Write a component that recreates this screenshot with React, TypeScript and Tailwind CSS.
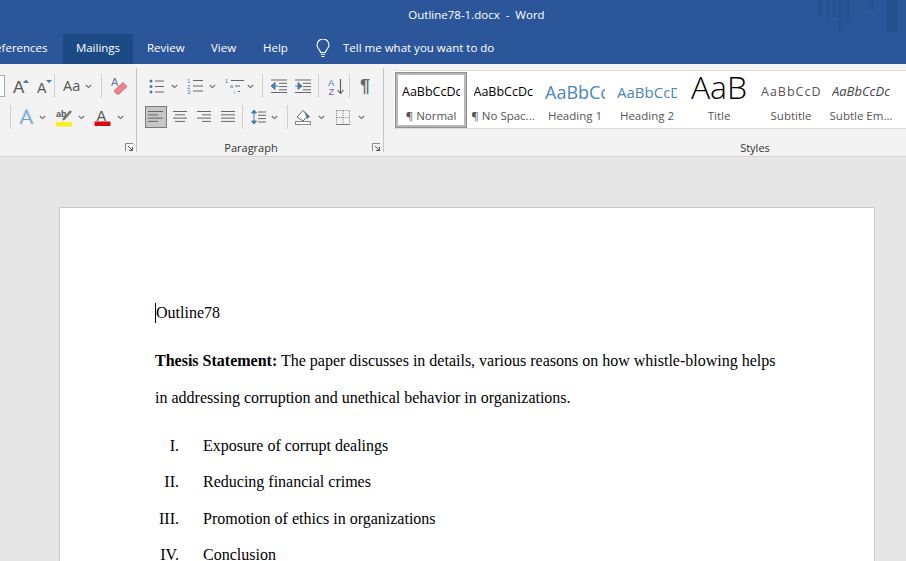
import React from "react";

const ui = "font-['Open_Sans','Noto_Sans',sans-serif]";
const B = "#4a7ba6";

function Svg({ w, h, children, className = "" }: { w: number; h: number; children: React.ReactNode; className?: string }) {
  return (
    <svg width={w} height={h} viewBox={`0 0 ${w} ${h}`} fill="none" className={`shrink-0 block ${className}`}>
      {children}
    </svg>
  );
}
const Chev = ({ className = "" }: { className?: string }) => (
  <Svg w={7} h={5} className={className}>
    <path d="M.8 1 3.5 3.6 6.2 1" stroke="#6a6a6a" strokeWidth="1.1" />
  </Svg>
);
const Sep = ({ className = "" }: { className?: string }) => <div className={`w-px h-[24px] bg-[#d0d0d0] shrink-0 ${className}`} />;

const Lines = ({ rows }: { rows: [number, number][] }) => (
  <Svg w={16} h={14}>
    {rows.map(([a, b], i) => (
      <path key={i} d={`M${a} ${1.5 + i * 3.3}H${b}`} stroke="#666" strokeWidth="1" />
    ))}
  </Svg>
);

const Launcher = () => (
  <Svg w={9} h={9}>
    <path d="M.5 8V.5H8" stroke="#888" />
    <path d="M3 3 7.5 7.5M7.5 4v3.5H4" stroke="#555" />
  </Svg>
);

function Bullets() {
  return (
    <Svg w={15} h={15}>
      {[2, 7.5, 13].map((y) => (
        <g key={y}>
          <circle cx="2" cy={y} r="1.5" fill={B} />
          <path d={`M6 ${y}H15`} stroke="#666" />
        </g>
      ))}
    </Svg>
  );
}
function Numbers() {
  return (
    <Svg w={16} h={16}>
      {[5, 10.5, 15.5].map((y, i) => (
        <g key={y}>
          <text x="0" y={y} fontSize="6" fill={B} fontFamily="Liberation Sans">{i + 1}</text>
          <path d={`M6 ${y - 2.5}H16`} stroke="#666" />
        </g>
      ))}
    </Svg>
  );
}
function Multi() {
  return (
    <Svg w={19} h={16}>
      <text x="0" y="5" fontSize="5.5" fill={B} fontFamily="Liberation Sans">1</text>
      <path d="M6 2.5H19" stroke="#666" />
      <text x="5" y="10" fontSize="5.5" fill={B} fontFamily="Liberation Sans">a</text>
      <path d="M10 8H15" stroke="#666" />
      <text x="9" y="15.5" fontSize="5.5" fill={B} fontFamily="Liberation Sans">i</text>
      <path d="M13 13.5H15" stroke="#666" />
    </Svg>
  );
}
function Indent({ flip }: { flip?: boolean }) {
  return (
    <Svg w={17} h={14}>
      <path d="M1 1H17M9 4.3H17M9 7.6H17M9 10.8H17M1 13.5H17" stroke="#666" />
      {flip ? (
        <path d="M1 7H5M4 3.5 8 7 4 10.5Z" fill={B} stroke={B} />
      ) : (
        <path d="M8 7H4M5 3.5 1 7 5 10.5Z" fill={B} stroke={B} />
      )}
    </Svg>
  );
}
function Sort() {
  return (
    <Svg w={17} h={17}>
      <text x="0" y="8" fontSize="9.5" fill={B} fontFamily="Liberation Sans">A</text>
      <text x="0.5" y="16.5" fontSize="9.5" fill="#8a5aa8" fontFamily="Liberation Sans">Z</text>
      <path d="M12.5 1V15M9.5 12 12.5 15.5 15.5 12" stroke="#555" strokeWidth="1.1" />
    </Svg>
  );
}
function Shading() {
  return (
    <Svg w={17} h={16}>
      <path d="M2 8 8 1.5 13 7 8 12Z" fill="#fff" stroke="#666" />
      <path d="M9 2 15 7.5 12 10Z" fill={B} />
      <rect x="0.5" y="12.5" width="15" height="3" fill="#fff" stroke="#888" />
    </Svg>
  );
}
function Borders() {
  return (
    <Svg w={14} h={15}>
      <path d="M.5.5H13.5V14.5H.5Z M7 .5V14.5 M.5 7.5H13.5" stroke="#777" strokeDasharray="1 1.2" />
      <path d="M.5 14.5H13.5" stroke="#777" />
    </Svg>
  );
}
function LineSpacing() {
  return (
    <Svg w={15} h={16}>
      <path d="M3 1V15" stroke={B} />
      <path d="M.5 4 3 1 5.5 4ZM.5 12 3 15 5.5 12Z" fill={B} stroke={B} />
      <path d="M7 3H15M7 6.3H15M7 9.6H15M7 13H15" stroke="#666" />
    </Svg>
  );
}
function Eraser() {
  return (
    <Svg w={17} h={19}>
      <text x="0" y="9" fontSize="11" fill="#6f6f9a" fontFamily="Liberation Sans">A</text>
      <path d="M3 14 12 5.5 16 9.5 8 17 5.5 17Z" fill="#e9848f" stroke="#d96a78" />
    </Svg>
  );
}
function TextEffects() {
  return (
    <Svg w={15} h={16}>
      <path d="M1.5 15 7.5 1.5 13.5 15" stroke="#c3dcef" strokeWidth="3.6" strokeLinejoin="round" />
      <path d="M1.5 15 7.5 1.5 13.5 15M4 10.5H11" stroke="#6f9cc4" strokeWidth="1.1" />
    </Svg>
  );
}
function Highlight() {
  return (
    <Svg w={17} h={19}>
      <text x="0" y="9" fontSize="9" fontWeight="700" fill="#555" fontFamily="Liberation Sans">ab</text>
      <path d="M7 12 15 3" stroke="#777" strokeWidth="2.6" />
      <rect x="0" y="14" width="16" height="4.5" fill="#f7f01c" />
    </Svg>
  );
}
function FontColor() {
  return (
    <Svg w={17} h={19}>
      <text x="2.5" y="12.5" fontSize="14.5" fill="#555" fontFamily="Liberation Sans">A</text>
      <rect x="0.5" y="13.5" width="16" height="4.5" fill="#d9090f" />
    </Svg>
  );
}
function Grow({ small }: { small?: boolean }) {
  return (
    <Svg w={16} h={18}>
      <text x={0} y={16} fontSize={small ? 14 : 17} fill="#555" fontFamily="Liberation Sans">A</text>
      <path d={small ? "M9 3H15L12 6Z" : "M10 6 13 2.5 16 6Z"} fill={B} />
    </Svg>
  );
}
function Bulb() {
  return (
    <svg width="14" height="19" viewBox="0 0 14 19" fill="none" className="shrink-0 block">
      <path d="M4.5 13.5C4.5 10.5 1 9.5 1 6A6 6 0 0 1 13 6C13 9.5 9.5 10.5 9.5 13.5Z" stroke="#fff" strokeWidth="1.1" />
      <path d="M4.8 15.3H9.2M5.5 17.5H8.5" stroke="#fff" strokeWidth="1.1" />
    </svg>
  );
}

const Tab = ({ children, className = "" }: { children: React.ReactNode; className?: string }) => (
  <div className={`h-[30px] flex items-center pb-[2px] text-[11.5px] text-white leading-none shrink-0 ${className}`}>{children}</div>
);

function StyleItem({ sample, sampleClass, label, w, selected }: { sample: string; sampleClass: string; label: string; w: string; selected?: boolean }) {
  return (
    <div className={`${w} h-[56px] shrink-0 flex flex-col items-center overflow-hidden ${selected ? "bg-white border-[3px] border-[#b9b9b9] outline outline-1 outline-[#8f8f8f] -outline-offset-1" : "border-[3px] border-transparent"}`}>
      <div className="h-[35px] w-full flex items-center justify-center overflow-hidden shrink-0">
        <span className={`whitespace-nowrap block overflow-hidden text-clip ${sampleClass}`}>{sample}</span>
      </div>
      <div className="text-[11.5px] leading-none text-[#555] whitespace-nowrap">{label}</div>
    </div>
  );
}

const docLine = "whitespace-nowrap text-[16px] text-black";

function ListRow({ n, t, className }: { n: string; t: string; className: string }) {
  return (
    <div className={`flex ${docLine} h-[20px] leading-[20px] ${className}`}>
      <div className="w-[24px] text-right">{n}</div>
      <div className="ml-[24px]">{t}</div>
    </div>
  );
}

export default function App() {
  return (
    <div className={`w-[906px] h-[561px] overflow-hidden bg-[#e6e6e6] flex flex-col relative ${ui}`}>
      {/* Title bar */}
      <div className="h-[34px] bg-[#2b579a] flex items-center justify-center shrink-0 relative pb-[4px]">
        <div className="text-[11.5px] text-white whitespace-pre leading-none ml-[47px]">Outline78-1.docx  -  Word</div>
        <svg width="90" height="34" viewBox="0 0 90 34" className="absolute right-0 top-0">
          <g fill="#24508c">
            <rect x="2" y="0" width="5" height="16" opacity="0.8" />
            <rect x="10" y="0" width="4" height="21" opacity="0.6" />
            <rect x="16" y="0" width="5" height="17" opacity="0.6" />
            <rect x="22" y="0" width="5" height="32" opacity="0.6" />
            <rect x="29" y="0" width="5" height="22" opacity="0.6" />
            <rect x="52" y="0" width="6" height="10" opacity="0.6" />
            <rect x="71" y="0" width="10" height="32" />
          </g>
        </svg>
      </div>
      {/* Tabs */}
      <div className="h-[30px] bg-[#2b579a] flex shrink-0 overflow-hidden">
        <Tab className="ml-[-12px] w-[60px]">References</Tab>
        <Tab className="ml-[15px] w-[70px] justify-center bg-[#1c4a85]">Mailings</Tab>
        <Tab className="ml-[14px] w-[37px]">Review</Tab>
        <Tab className="ml-[27px] w-[25px]">View</Tab>
        <Tab className="ml-[27px] w-[26px]">Help</Tab>
        <Tab className="ml-[27px]"><Bulb /></Tab>
        <Tab className="ml-[13px]">Tell me what you want to do</Tab>
      </div>
      {/* Ribbon */}
      <div className="h-[93px] bg-[#f3f3f3] border-b border-[#d4d4d4] flex shrink-0">
        {/* Font group */}
        <div className="w-[137px] shrink-0 flex flex-col relative border-r border-[#c6c6c6] mb-[4px] mt-[4px]">
          <div className="h-[22px] mt-[7px] flex items-center">
            <div className="w-[5px] h-[22px] bg-white border border-l-0 border-[#ababab] shrink-0" />
            <div className="ml-[8px]"><Grow /></div>
            <div className="ml-[8px]"><Grow small /></div>
            <Sep className="ml-[1px]" />
            <span className="ml-[7px] text-[14.5px] leading-none text-[#555] w-[21px] pl-[1px]">Aa</span>
            <Chev className="ml-[2px]" />
            <Sep className="ml-[9px]" />
            <div className="ml-[9px]"><Eraser /></div>
          </div>
          <div className="h-[22px] mt-[9px] flex items-center">
            <Sep className="ml-[10px]" />
            <div className="ml-[8px]"><TextEffects /></div>
            <Chev className="ml-[5px]" />
            <div className="ml-[10px]"><Highlight /></div>
            <Chev className="ml-[5px]" />
            <div className="ml-[9px]"><FontColor /></div>
            <Chev className="ml-[6px]" />
          </div>
          <div className="mt-auto ml-[125px]"><Launcher /></div>
        </div>
        {/* Paragraph group */}
        <div className="w-[247px] shrink-0 flex flex-col border-r border-[#c6c6c6] mb-[4px] mt-[4px]">
          <div className="h-[22px] mt-[7px] flex items-center">
            <div className="ml-[12px]"><Bullets /></div>
            <Chev className="ml-[7px]" />
            <div className="ml-[9px]"><Numbers /></div>
            <Chev className="ml-[6px]" />
            <div className="ml-[9px]"><Multi /></div>
            <Chev className="ml-[3px]" />
            <Sep className="ml-[8px]" />
            <div className="ml-[7px]"><Indent /></div>
            <div className="ml-[7px]"><Indent flip /></div>
            <Sep className="ml-[7px]" />
            <div className="ml-[9px]"><Sort /></div>
            <Sep className="ml-[4px]" />
            <span className="ml-[10px] text-[18px] font-['Liberation_Sans'] font-bold leading-none text-[#666] -mt-[1px]">¶</span>
          </div>
          <div className="h-[22px] mt-[9px] flex items-center">
            <div className="ml-[8px] w-[22px] h-[22px] bg-[#c6c6c6] border border-[#7b7b7b] flex items-center justify-center shrink-0">
              <Lines rows={[[0, 15], [0, 10], [0, 15], [0, 10]]} />
            </div>
            <div className="ml-[5px]"><Lines rows={[[1, 15], [3, 13], [1, 15], [3, 13]]} /></div>
            <div className="ml-[8px]"><Lines rows={[[1, 15], [6, 15], [1, 15], [6, 15]]} /></div>
            <div className="ml-[8px]"><Lines rows={[[1, 15], [1, 15], [1, 15], [1, 15]]} /></div>
            <Sep className="ml-[6px]" />
            <div className="ml-[8px]"><LineSpacing /></div>
            <Chev className="ml-[5px]" />
            <Sep className="ml-[9px]" />
            <div className="ml-[7px]"><Shading /></div>
            <Chev className="ml-[6px]" />
            <div className="ml-[11px]"><Borders /></div>
            <Chev className="ml-[8px]" />
          </div>
          <div className="mt-auto flex items-end">
            <div className="text-[11px] leading-none text-[#333] w-[228px] text-center -mb-[1px]">Paragraph</div>
            <div className="ml-[7px]"><Launcher /></div>
          </div>
        </div>
        {/* Styles group */}
        <div className="flex-1 flex flex-col mt-[6px] mb-[4px] ml-[10px]">
          <div className="h-[59px] bg-white border-y border-[#dddddd] flex items-center pl-[1px]">
            <StyleItem w="w-[72px]" selected sample="AaBbCcDc" sampleClass="text-[12.5px] text-black max-w-[58px]" label="¶ Normal" />
            <StyleItem w="w-[72px]" sample="AaBbCcDc" sampleClass="text-[12.5px] text-black max-w-[59px]" label="¶ No Spac..." />
            <StyleItem w="w-[72px]" sample="AaBbCc" sampleClass="text-[18px] text-[#4a86b8] max-w-[60px]" label="Heading 1" />
            <StyleItem w="w-[72px]" sample="AaBbCcD" sampleClass="text-[15px] text-[#4a86b8] max-w-[60px]" label="Heading 2" />
            <StyleItem w="w-[72px]" sample="AaB" sampleClass="text-[32px] font-light text-black leading-[19px] h-[23px] -mt-[7px]" label="Title" />
            <StyleItem w="w-[72px]" sample="AaBbCcD" sampleClass="text-[12.5px] tracking-[1px] text-[#555] max-w-[60px]" label="Subtitle" />
            <StyleItem w="w-[68px]" sample="AaBbCcDc" sampleClass="text-[13px] italic text-[#444] max-w-[60px]" label="Subtle Em..." />
          </div>
          <div className="mt-auto text-[11px] leading-none text-[#333] text-center w-[722px] -mb-[1px]">Styles</div>
        </div>
      </div>
      {/* Document */}
      <div className="flex-1 min-h-0 pl-[59px] pt-[50px]">
        <div className="w-[816px] h-[400px] bg-white border border-[#c8c8c8] font-['Liberation_Serif',serif] pl-[95px] pt-[95px]">
          <div className={`${docLine} h-[20px] leading-[20px] border-l border-black w-max`}>Outline78</div>
          <div className={`${docLine} h-[20px] leading-[20px] mt-[28px]`}><b>Thesis Statement:</b> The paper discusses in details, various reasons on how whistle-blowing helps</div>
          <div className={`${docLine} h-[20px] leading-[20px] mt-[17px]`}>in addressing corruption and unethical behavior in organizations.</div>
          <ListRow n="I." t="Exposure of corrupt dealings" className="mt-[28px]" />
          <ListRow n="II." t="Reducing financial crimes" className="mt-[16px]" />
          <ListRow n="III." t="Promotion of ethics in organizations" className="mt-[17px]" />
          <ListRow n="IV." t="Conclusion" className="mt-[16px]" />
        </div>
      </div>
    </div>
  );
}
